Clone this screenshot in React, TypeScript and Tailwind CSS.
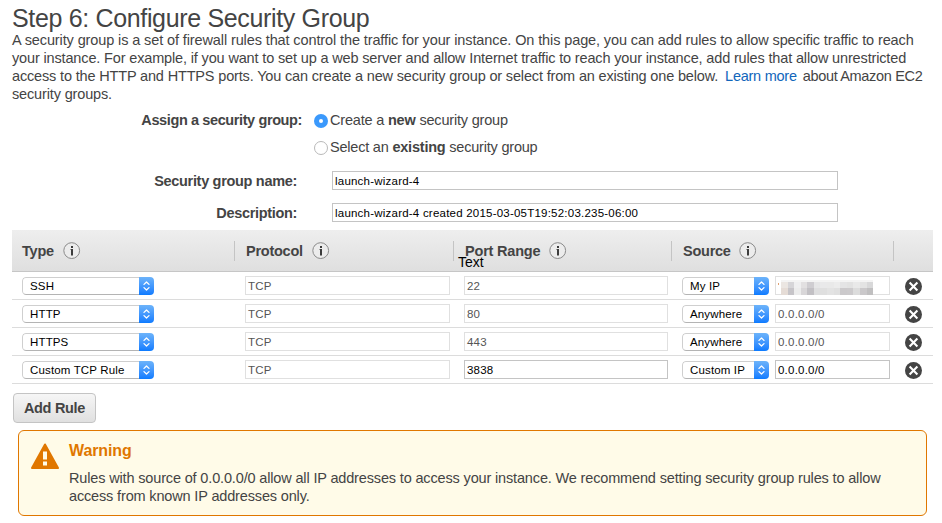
import React from "react";

type Rule = {
  type: string;
  port: string;
  source: string;
  address: string | null;
  editable?: boolean;
};

const rules: Rule[] = [
  { type: "SSH", port: "22", source: "My IP", address: null },
  { type: "HTTP", port: "80", source: "Anywhere", address: "0.0.0.0/0" },
  { type: "HTTPS", port: "443", source: "Anywhere", address: "0.0.0.0/0" },
  { type: "Custom TCP Rule", port: "3838", source: "Custom IP", address: "0.0.0.0/0", editable: true },
];

const mosaic = [
  ["#ebe6e2", "#d6d5d8", "#efeff0", "#e2e0e1", "#cfcdd1", "#e6e6e7", "#e9e9ea", "#e9e9e9", "#ececec", "#e4e4e5", "#e2e2e2", "#e9e9e9", "#e3e3e3", "#d8d8d9"],
  ["#e5dcd6", "#c6c4c8", "#ececec", "#d8d6d8", "#c2c0c4", "#dededf", "#dfdfdf", "#e3e3e3", "#e0e0e0", "#cbc9cb", "#cccacc", "#dcdcdc", "#cac8ca", "#c0bfc0"],
];

function InfoIcon() {
  return (
    <svg className="h-[18px] w-[18px] shrink-0" viewBox="0 0 18 18">
      <circle cx="8.7" cy="8.6" r="7.9" fill="#ececec" stroke="#8a8a8a" strokeWidth="1" />
      <path d="M8 4h2v2H8zM8 7h2v6.6H8z" fill="#3c3c3c" />
      <path d="M7 7h1v.8H7z" fill="#888" />
    </svg>
  );
}

function Select({ label, className }: { label: string; className: string }) {
  return (
    <div className={"flex h-[18px] overflow-hidden rounded-[4px] bg-white text-[11.5px] leading-[17px] tracking-[0.15px] text-black " + className}>
      <div className="flex-1 whitespace-nowrap rounded-l-[4px] border border-r-0 border-[#cfcfcf] border-b-[#b4b4b4] pl-[7px] leading-[17px]">{label}</div>
      <div className="flex w-[15px] items-center justify-center bg-linear-to-b from-[#6cb3fa] to-[#0a7bff]">
        <svg className="h-[12px] w-[9px]" viewBox="0 0 9 12" fill="none" stroke="#fff" strokeWidth="1.3" strokeLinecap="round" strokeLinejoin="round">
          <path d="M2 4.4L4.5 2L7 4.4M2 7.6L4.5 10L7 7.6" />
        </svg>
      </div>
    </div>
  );
}

function Field({ text, className, strong }: { text: string; className: string; strong?: boolean }) {
  return (
    <div
      className={
        "h-[19px] whitespace-nowrap border bg-white pl-[2px] text-[11.5px] leading-[18px] tracking-[0.22px] " +
        (strong ? "border-[#c4c4c4] text-black " : "border-[#e0e0e0] text-[#555] ") +
        className
      }
    >
      {text}
    </div>
  );
}

function HeaderCell({ label, className, textClass }: { label: string; className: string; textClass: string }) {
  return (
    <div className={"flex h-[20px] items-center " + className}>
      <span className={"h-[20px] shrink-0 whitespace-nowrap leading-[20px] " + textClass}>{label}</span>
      <InfoIcon />
    </div>
  );
}

export default function App() {
  return (
    <div className="h-[523px] w-[942px] overflow-hidden bg-white font-['Liberation_Sans',Arial,sans-serif] text-[14.5px] text-[#444]">
      <h1 className="h-[31px] pl-[12px] pt-[3px] text-[25px] leading-[30px] tracking-[-0.34px] whitespace-nowrap">Step 6: Configure Security Group</h1>
      <div className="h-[72px] pl-[12px] leading-[18px] tracking-[-0.15px] whitespace-nowrap">
        <div className="tracking-[-0.113px]">A security group is a set of firewall rules that control the traffic for your instance. On this page, you can add rules to allow specific traffic to reach</div>
        <div>your instance. For example, if you want to set up a web server and allow Internet traffic to reach your instance, add rules that allow unrestricted</div>
        <div>
          <span className="tracking-[-0.16px]">access to the HTTP and HTTPS ports. You can create a new security group or select from an existing one below.</span>
          <a className="ml-[7px] tracking-[-0.25px] text-[#1166bb]">Learn more</a>
          <span className="ml-[6px] tracking-[-0.33px]">about Amazon EC2</span>
        </div>
        <div>security groups.</div>
      </div>

      <div className="flex h-[27px] pt-[8px] leading-[18px] whitespace-nowrap">
        <div className="w-[302px] text-right font-bold tracking-[-0.39px]">Assign a security group:</div>
        <div className="ml-[12px] mt-[3px] flex h-[14px] w-[14px] items-center justify-center rounded-full bg-[#3b99fc]">
          <div className="h-[4px] w-[4px] rounded-full bg-white" />
        </div>
        <div className="ml-[2px] tracking-[-0.19px]">Create a <b>new</b> security group</div>
      </div>
      <div className="flex h-[27px] pt-[8px] leading-[18px] whitespace-nowrap">
        <div className="ml-[314px] mt-[3px] h-[14px] w-[14px] rounded-full border border-[#b9b9b9] bg-white" />
        <div className="ml-[2px] tracking-[-0.21px]">Select an <b>existing</b> security group</div>
      </div>
      <div className="mt-[14px] flex h-[32px] whitespace-nowrap">
        <div className="w-[297px] text-right font-bold leading-[20px] tracking-[-0.31px]">Security group name:</div>
        <Field strong text="launch-wizard-4" className="ml-[35px] w-[506px]" />
      </div>
      <div className="flex h-[27px] whitespace-nowrap">
        <div className="w-[297px] text-right font-bold leading-[20px] tracking-[-0.33px]">Description:</div>
        <Field strong text="launch-wizard-4 created 2015-03-05T19:52:03.235-06:00" className="ml-[35px] w-[506px]" />
      </div>

      <div className="relative ml-[12px] flex h-[42px] w-[921px] border-b border-[#c6c6c6] bg-linear-to-b from-[#eeeeee] to-[#dfdfdf] pt-[11px] font-bold">
        <HeaderCell label="Type" className="w-[222px] pl-[10px]" textClass="w-[41px] tracking-[-0.2px]" />
        <HeaderCell label="Protocol" className="w-[219px] border-l border-[#c4c4c4] pl-[11px]" textClass="w-[66px] tracking-[-0.25px]" />
        <HeaderCell label="Port Range" className="w-[218px] border-l border-[#c4c4c4] pl-[11px]" textClass="w-[84px] tracking-[-0.2px]" />
        <HeaderCell label="Source" className="w-[222px] border-l border-[#c4c4c4] pl-[11px]" textClass="w-[56px] tracking-[-0.25px]" />
        <div className="h-[20px] border-l border-[#c4c4c4]" />
        <span className="absolute left-[446px] top-[24px] text-[14px] font-normal leading-[16px] text-black">Text</span>
      </div>

      {rules.map((rule, i) => (
        <div key={i} className="ml-[12px] flex h-[28px] w-[921px] items-start border-b border-[#dcdcdc] pt-[4px]">
          <Select label={rule.type} className="ml-[10px] mt-[1px] w-[132px]" />
          <Field text="TCP" className="ml-[91px] w-[205px]" />
          <Field text={rule.port} strong={rule.editable} className="ml-[14px] w-[204px]" />
          <Select label={rule.source} className="ml-[14px] mt-[1px] w-[87px]" />
          {rule.address ? (
            <Field text={rule.address} strong={rule.editable} className="ml-[6px] w-[115px]" />
          ) : (
            <div className="ml-[6px] flex h-[19px] w-[115px] border border-[#e0e0e0] pl-[2px] pt-[3px]">
              <div className="mt-[3px] h-[2px] w-[1px] bg-[#e0a070]" />
              <div className="ml-[2px] w-[92px]">
                <div className="h-[2px] bg-[#f4f4f4]" />
                {mosaic.map((row, r) => (
                  <div key={r} className={r === 0 ? "flex h-[6px]" : "flex h-[7px]"}>
                    {row.map((color, c) => (
                      <div key={c} className="flex-1" style={{ backgroundColor: color }} />
                    ))}
                  </div>
                ))}
              </div>
            </div>
          )}
          <svg className="ml-[15px] mt-[2px] h-[17px] w-[17px]" viewBox="0 0 17 17">
            <circle cx="8.5" cy="8.5" r="8.5" fill="#444" />
            <path d="M4.6 4.6L12.4 12.4M12.4 4.6L4.6 12.4" stroke="#fff" strokeWidth="2.1" />
          </svg>
        </div>
      ))}

      <div className="ml-[13px] mt-[9px] flex h-[30px] w-[83px] items-center justify-center rounded-[4px] border border-[#c4c4c4] bg-linear-to-b from-[#f6f6f6] to-[#e0e0e0] pt-[2px] font-bold tracking-[-0.3px] whitespace-nowrap">Add Rule</div>

      <div className="ml-[18px] mt-[7px] flex h-[86px] w-[909px] rounded-[6px] border border-[#e07700] bg-[#fffbe8]">
        <svg className="ml-[12px] mt-[12px] h-[26px] w-[28px] shrink-0" viewBox="0 0 28 26">
          <path d="M14 1.5L27 25H1Z" fill="#e07700" stroke="#e07700" strokeWidth="2" strokeLinejoin="round" />
          <path d="M12 8.5h4v8h-4zM12 18.5h4v4h-4z" fill="#fffbe8" />
        </svg>
        <div className="ml-[10px] pt-[11px] whitespace-nowrap">
          <div className="text-[16px] font-bold leading-[18px] tracking-[-0.1px] text-[#e07700]">Warning</div>
          <div className="mt-[9px] leading-[18px] tracking-[-0.153px]">
            <div>Rules with source of 0.0.0.0/0 allow all IP addresses to access your instance. We recommend setting security group rules to allow</div>
            <div>access from known IP addresses only.</div>
          </div>
        </div>
      </div>
    </div>
  );
}
